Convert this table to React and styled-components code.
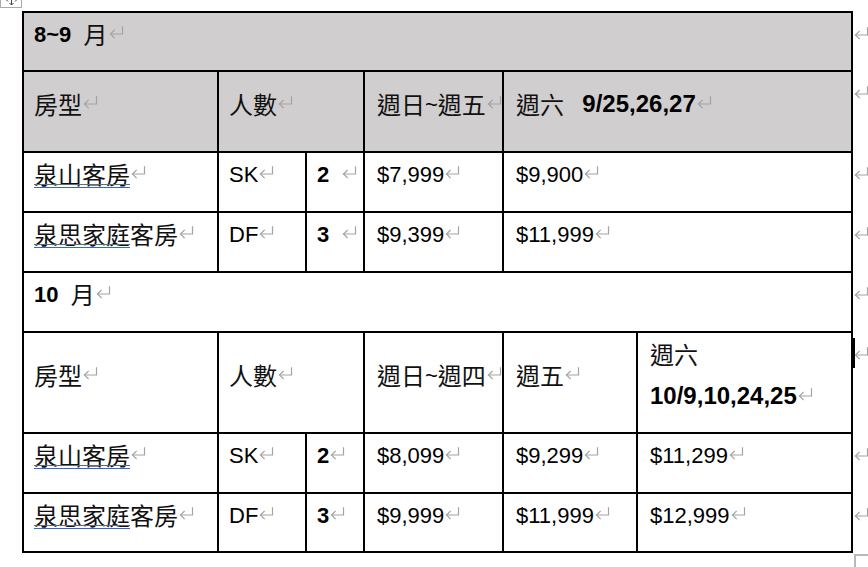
import React from 'react';
import styled, { createGlobalStyle } from 'styled-components';

const Global = createGlobalStyle`
  html, body { margin: 0; padding: 0; background: #fff; overflow: hidden; }
  body {
    font-family: "Liberation Sans", Arial, "Noto Sans CJK TC", sans-serif;
    color: #000;
  }
`;

const Page = styled.div`
  position: relative;
  width: 868px;
  height: 567px;
  box-sizing: border-box;
  padding: 11px 0 0 22px;
`;

const MoveHandle = styled.div`
  position: absolute;
  left: 0;
  top: -9px;
  width: 20px;
  height: 15px;
  border: 1px solid #a9a9a9;
  background: #fff;
  display: flex;
  align-items: center;
  justify-content: center;
`;

const Frame = styled.div`
  position: relative;
  width: 829px;
  border-top: 2px solid #000;
  border-left: 2px solid #000;
`;

const ResizeHandle = styled.div`
  position: absolute;
  left: calc(100% + 1px);
  top: calc(100% + 1px);
  width: 14px;
  height: 14px;
  border-top: 2px solid #b9b9b9;
  border-left: 2px solid #b9b9b9;
`;

const Table = styled.table`
  border-collapse: separate;
  border-spacing: 0;
  table-layout: fixed;
  width: 829px;
  font-size: 22px;
  line-height: 41px;
`;

const Row = styled.tr`
  height: ${(p) => p.$h}px;
`;

const Cell = styled.td`
  position: relative;
  box-sizing: border-box;
  padding: 0 4px 15px ${(p) => (p.$wide ? 12 : 10)}px;
  border-right: 2px solid #000;
  border-bottom: 2px solid #000;
  vertical-align: middle;
  white-space: nowrap;
  background: ${(p) => (p.$shade ? '#d0cece' : '#fff')};
`;

const Han = styled.span`
  position: relative;
  font-family: "Noto Sans CJK TC", "Noto Sans CJK SC", sans-serif;
  font-size: 24px;
  line-height: 1;
  vertical-align: -2px;
  color: #111;
  ${(p) =>
    p.$link &&
    `
    &::after {
      content: '';
      position: absolute;
      left: 0;
      right: 0;
      bottom: 3px;
      height: 2px;
      border-top: 1px solid #5f6a80;
      border-bottom: 1.5px solid #2f66d8;
    }
  `}
`;

const B = styled.b`
  font-weight: 700;
  font-size: ${(p) => p.$size ?? 22}px;
`;

const MarkSvg = styled.svg`
  width: 15px;
  height: 12px;
  margin-left: ${(p) => p.$gap ?? 1}px;
  vertical-align: 4px;
  overflow: visible;
`;

const RowEndSvg = styled.svg`
  position: absolute;
  left: calc(100% + 3px);
  top: 14px;
  width: 15px;
  height: 12px;
  overflow: visible;
`;

const Caret = styled.div`
  position: absolute;
  left: calc(100% + 2px);
  top: 5px;
  width: 2px;
  height: 30px;
  background: #000;
`;

const markPaths = (
  <g fill="none" stroke="#a3a3a3" strokeWidth="1.2" strokeLinecap="square">
    <path d="M13.5 0.8 V8 H1.5" />
    <path d="M5.2 4.3 L1.5 8 L5.2 11.7" />
  </g>
);

const Mark = ({ gap }) => (
  <MarkSvg $gap={gap} viewBox="0 0 15 12">
    {markPaths}
  </MarkSvg>
);

const RowEnd = () => <RowEndSvg viewBox="0 0 15 12">{markPaths}</RowEndSvg>;

const CJK = /([\u2E80-\u9FFF\uF900-\uFAFF\uFF00-\uFFEF]+)/;
const Txt = ({ children }) =>
  String(children)
    .split(CJK)
    .map((s, i) => (i % 2 === 1 ? <Han key={i}>{s}</Han> : s));

const widths = [195, 88, 58, 139, 134, 215];

const Month = ({ num, shade }) => (
  <Row $h={shade ? 59 : 60}>
    <Cell colSpan={6} $shade={shade}>
      <B>{num + '\u00a0'}</B>
      {'\u00a0'}
      <Han>月</Han>
      <Mark />
      <RowEnd />
    </Cell>
  </Row>
);

const Room = ({ h, link, rest, code, n, nGap, prices, last }) => (
  <Row $h={h}>
    <Cell>
      <Han $link>{link}</Han>
      {rest && <Han>{rest}</Han>}
      <Mark />
    </Cell>
    <Cell>
      {code}
      <Mark />
    </Cell>
    <Cell>
      <B>{n}</B>
      <Mark gap={nGap} />
    </Cell>
    {prices.map((p, i) => (
      <Cell key={p} $wide colSpan={i === prices.length - 1 ? last : 1}>
        {p}
        <Mark />
        {i === prices.length - 1 && <RowEnd />}
      </Cell>
    ))}
  </Row>
);

export default function App() {
  return (
    <>
      <Global />
      <Page>
        <MoveHandle>
          <svg width="13" height="13" viewBox="0 0 13 13">
            <g fill="none" stroke="#444" strokeWidth="1">
              <path d="M6.5 1 V12 M1 6.5 H12" />
              <path d="M4.5 3 L6.5 1 L8.5 3 M4.5 10 L6.5 12 L8.5 10 M3 4.5 L1 6.5 L3 8.5 M10 4.5 L12 6.5 L10 8.5" />
            </g>
          </svg>
        </MoveHandle>
        <Frame>
          <Table>
            <colgroup>
              {widths.map((w, i) => (
                <col key={i} style={{ width: w }} />
              ))}
            </colgroup>
            <tbody>
              <Month num="8~9" shade />
              <Row $h={81}>
                <Cell $shade>
                  <Txt>房型</Txt>
                  <Mark />
                </Cell>
                <Cell $shade colSpan={2}>
                  <Txt>人數</Txt>
                  <Mark />
                </Cell>
                <Cell $shade $wide>
                  <Txt>週日~週五</Txt>
                  <Mark />
                </Cell>
                <Cell $shade $wide colSpan={2}>
                  <Txt>週六</Txt>
                  {'\u00a0\u00a0\u00a0'}
                  <B $size={24}>9/25,26,27</B>
                  <Mark />
                  <RowEnd />
                </Cell>
              </Row>
              <Room h={60} link="泉山客房" code="SK" n="2" nGap={13} prices={['$7,999', '$9,900']} last={2} />
              <Room h={60} link="泉思家庭" rest="客房" code="DF" n="3" nGap={13} prices={['$9,399', '$11,999']} last={2} />
              <Month num="10" />
              <Row $h={101}>
                <Cell>
                  <Txt>房型</Txt>
                  <Mark />
                </Cell>
                <Cell colSpan={2}>
                  <Txt>人數</Txt>
                  <Mark />
                </Cell>
                <Cell $wide>
                  <Txt>週日~週四</Txt>
                  <Mark />
                </Cell>
                <Cell $wide>
                  <Txt>週五</Txt>
                  <Mark />
                </Cell>
                <Cell $wide>
                  <Txt>週六</Txt>
                  <br />
                  <B $size={24}>10/9,10,24,25</B>
                  <Mark />
                  <Caret />
                  <RowEnd />
                </Cell>
              </Row>
              <Room h={60} link="泉山客房" code="SK" n="2" nGap={1} prices={['$8,099', '$9,299', '$11,299']} last={1} />
              <Room h={59} link="泉思家庭" rest="客房" code="DF" n="3" nGap={1} prices={['$9,999', '$11,999', '$12,999']} last={1} />
            </tbody>
          </Table>
          <ResizeHandle />
        </Frame>
      </Page>
    </>
  );
}
